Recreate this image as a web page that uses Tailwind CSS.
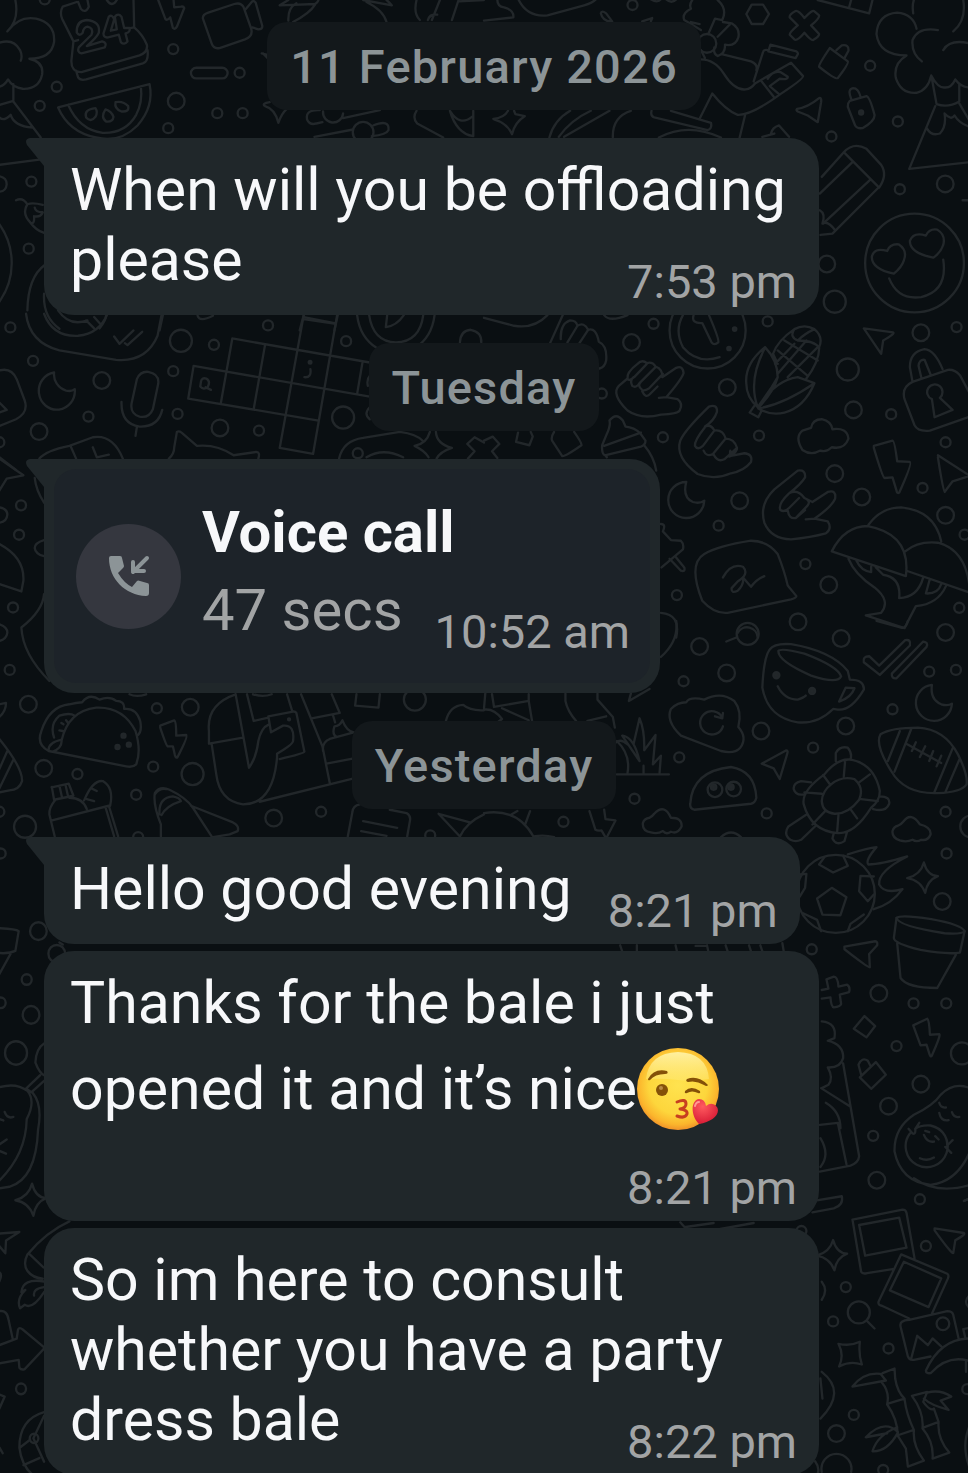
<!DOCTYPE html>
<html lang="en">
<head>
    <meta charset="UTF-8">
    <meta name="viewport" content="width=device-width, initial-scale=1.0">
    <title>Chat</title>
    <script src="https://cdn.jsdelivr.net/npm/@tailwindcss/browser@4"></script>
</head>
<body class="bg-[#0a0f12] font-['Roboto',sans-serif]">
    <main class="relative min-h-screen overflow-hidden pt-[22px] pl-11 pr-11">

        <!-- Wallpaper doodles -->
        <svg class="absolute inset-0 w-full h-full" viewBox="0 0 968 1473" preserveAspectRatio="xMidYMin slice" fill="none" stroke="#22272a" stroke-width="7" stroke-linecap="round" stroke-linejoin="round" aria-hidden="true">
            <defs>
                <circle id="s" r="15"/>
                <circle id="m" r="25"/>
                <circle id="l" r="33"/>
                <path id="star" d="M4-45Q14-6 46-4Q14 8 8 46Q-6 8-46 2Q-6-8 4-45Z"/>
            </defs>

            <!-- top left -->
            <g transform="scale(.3333)">
                <path d="M48 0Q60 60 24 94Q60 46 110 56Q168 70 164 126Q156 176 90 176Q134 186 128 224Q118 268 70 266Q40 262 26 238Q14 260-10 262M-10 132Q40 110 62 150Q70 168 64 182M42 252L42 302L-6 316M42 304L124 412M-6 344Q8 370 34 344Q44 378 100 382M0 494L120 478"/>
                <path d="M190 20Q180 36 188 56L222 124L216 180Q214 216 246 216L420 166Q446 156 442 134Q430 104 404 82L402 0M190 20L232 6M236 6L244 26Q258 42 268 20L264 0M322 0Q338 24 352 0M222 124L236 120M392 84L404 82M230 212L236 232Q242 242 260 238L430 190Q448 184 444 150"/>
                <path d="M232 98Q230 62 262 60Q304 64 298 98Q292 112 262 138L308 124Q324 128 316 142L246 160Q232 156 238 142L276 104Q284 84 264 80Q252 82 250 98Q240 110 232 98ZM328 50L312 100Q312 114 326 112L358 104L364 126Q374 136 384 124L378 100Q394 96 390 84L374 84L366 50Q356 38 346 50L352 88L334 92L344 58Q338 42 328 50Z"/>
                <path d="M176 322L450 252Q464 320 414 376Q360 430 290 412Q208 396 176 322ZM206 314Q240 390 310 398Q378 400 410 344Q430 306 424 260M288 324Q252 328 260 352Q274 368 288 350Q296 336 288 324ZM318 328Q302 352 320 364Q340 366 342 350Q336 334 318 328ZM348 306Q344 326 366 334Q390 336 386 318Q372 302 348 306Z"/>
                <path d="M476 0L498 58Q504 62 512 52L520 84Q526 90 532 80L554 24Q552 18 544 20L524 22L522 0"/>
                <path d="M610 56L636 130Q642 148 660 144L736 118Q762 108 754 84L732 22Q724 6 704 12L626 38Q608 44 610 56ZM738 28L758 4Q764 2 768 8L788 78Q788 88 776 88L758 82"/>
                <rect x="574" y="203" width="110" height="32" rx="16"/>
                <path d="M840 16L866 0M840 16L946 12Q960 2 954 -4M946 14Q930 40 880 66M866 62Q864 24 890 10M1090 0L1176 16Q1170 8 1160 0M1100 6Q1150 30 1160 66M1250 0Q1240 40 1260 60M1320 0L1296 60M1376 0L1356 60M1378 4L1452 0M1284 60Q1290 40 1312 44"/>
                <path d="M786 160L810 166M810 306Q784 310 796 318Q826 326 836 368Q846 340 860 328M810 180L790 160M960 330Q916 328 922 358Q930 376 950 370L968 366M1030 354L1140 330M970 334A30 30 0 0 0 1030 340M944 410L1060 388M1120 376Q1170 356 1166 390Q1160 404 1116 408M1250 332Q1236 352 1252 370L1330 412M1350 332Q1370 400 1420 408L1420 332M1350 332Q1380 380 1416 350"/>
                <circle cx="1090" cy="396" r="31"/>
                <path d="M50 600Q70 590 84 612Q100 606 130 614M84 612Q66 640 94 668Q106 672 104 648Q124 652 130 636Q108 636 106 622M94 668Q110 690 134 698M0 672A200 200 0 0 1 0 904M136 794Q86 830 84 930M134 880Q130 950 180 985M0 528Q22 532 22 552Q20 574 0 574M176 930Q210 980 264 960M260 960L284 984M284 950L302 970M300 984Q320 960 320 944"/>
                <path d="M490 944L480 990M594 946Q600 966 640 946M912 944L900 990M1014 944L1004 990M912 956L1008 970"/>
                <use href="#s" x="136" y="-2"/><use href="#s" x="521" y="147"/><use href="#s" x="720" y="218"/><use href="#s" x="172" y="260"/><use href="#s" x="121" y="317"/><use href="#m" x="530" y="303"/><use href="#s" x="653" y="339"/><use href="#s" x="729" y="339"/><use href="#s" x="506" y="384"/><use href="#s" x="96" y="544"/><use href="#s" x="88" y="745"/>
            </g>

            <!-- top right -->
            <g transform="translate(484 0) scale(.3333)">
                <path d="M40 0Q40 20 60 22Q90 30 88 52L0 62M104 0Q130 52 190 46L300 16Q330 8 340 -8M350 40Q352 30 366 40L384 64Q356 66 350 40ZM474 64L504 54L500 64M500 -2Q520 10 530 -2M546 -2Q562 12 576 -2"/>
                <path d="M624 0Q614 14 620 26Q592 40 600 60L650 90M620 66L646 72M700 0Q730 26 714 60L692 56L672 102M716 66L742 70Q768 86 762 112Q754 140 722 134Q724 160 700 168Q686 160 690 142M736 74L700 110M650 150L662 174M646 178Q690 176 718 220Q750 272 784 268Q800 266 812 250L920 188L956 228Q958 236 888 282Q800 346 760 344Q724 330 684 280L646 356M712 162L800 184Q822 194 816 210M808 244L836 156Q838 148 850 150M858 134L936 154Q944 160 938 166L934 174L852 154ZM832 244L868 290M850 236Q866 210 888 216L910 230Q912 240 886 236L856 258L884 282"/>
                <circle cx="668" cy="130" r="28"/>
                <path d="M802 14L836 14L854 42L836 72L802 72L786 42ZM932 34Q940 28 960 54Q984 28 990 34L1004 46Q1006 54 980 76L1004 102Q1004 110 986 120Q980 122 960 98Q938 124 930 118L916 104Q916 96 940 76L916 52Q914 44 932 34Z"/>
                <path d="M1036 144L1090 184Q1094 190 1060 234Q1054 240 1004 200Q1002 194 1036 144ZM1056 150L1072 136Q1094 132 1092 152L1080 174M1096 302L1146 288Q1156 290 1170 344Q1172 362 1134 384Q1118 386 1112 376L1090 320Q1090 308 1096 302ZM1100 296Q1088 266 1106 264Q1122 264 1128 290M938 326Q970 322 1004 294Q1012 292 1010 306L1000 366L970 346L940 334Q934 330 938 326ZM1000 0L1154 40L1164 0M1094 22L1100 0"/>
                <circle cx="1130" cy="337" r="6" fill="#22272a"/>
                <path d="M1296 86Q1286 42 1238 38Q1180 42 1176 102Q1184 166 1266 166Q1226 190 1234 234Q1250 282 1296 278Q1330 270 1340 226Q1360 264 1380 262Q1400 264 1412 238Q1430 262 1456 262M1286 40Q1280 0 1300 -20M1436 0Q1446 60 1406 94M1312 184Q1280 160 1284 120Q1300 80 1360 90M1376 150Q1396 116 1456 130M1342 236L1356 312Q1390 324 1424 304L1424 250M1352 318L1274 506L1456 486M1328 386Q1340 408 1366 400Q1386 380 1380 340Q1400 362 1410 346Q1424 370 1456 380M1424 310L1456 364"/>
                <path d="M28 356Q60 354 72 332M30 358Q70 370 84 402Q92 366 122 348M122 348L94 342L90 332M196 412Q210 360 258 332M224 410Q260 360 320 332M240 410L376 332M386 412Q384 350 440 332M502 332Q498 348 510 352L670 390Q684 386 680 368L560 332M524 412Q610 366 710 412M782 346L766 412M860 400Q864 382 884 376L914 410M834 410L870 400"/>
                <path d="M1078 456L1012 530M1104 486L1006 580M1156 540L1016 670M1180 564L1044 700L1008 704M1078 456L1184 562M1078 456Q1108 424 1146 446L1190 494Q1210 524 1184 562M1006 630Q1024 640 1014 670Q1030 660 1052 690"/>
                <circle cx="1290" cy="788" r="148"/>
                <path d="M1228 820Q1162 806 1162 770Q1168 740 1208 752Q1216 730 1242 732Q1270 750 1258 780Q1252 800 1228 820ZM1346 772Q1276 758 1276 722Q1286 694 1324 706Q1334 684 1358 688Q1384 704 1376 734Q1368 758 1346 772ZM1214 834Q1240 900 1310 890Q1390 872 1376 778M1434 600L1452 600"/>
                <use href="#s" x="445" y="15"/><use href="#s" x="1157" y="197"/><use href="#s" x="1240" y="364"/><use href="#s" x="1041" y="409"/><use href="#s" x="1246" y="567"/><use href="#m" x="1382" y="551"/><use href="#m" x="1027" y="791"/><use href="#l" x="1051" y="904"/>
            </g>

            <!-- crossword, microphone -->
            <g transform="translate(0 310) scale(.3333)">
                <path d="M80 10Q90 96 180 120L350 148Q440 156 474 76L486 14M134 10Q160 80 236 76Q300 70 324 10M344 78L360 100L402 60M376 98L384 104L428 64"/>
                <path d="M164 186A54 56 0 1 0 226 236Q216 244 200 240A50 50 0 0 1 164 186ZM412 206Q422 182 446 184Q480 190 476 220L460 296Q448 324 420 318Q392 310 396 280ZM366 274Q364 340 420 348Q476 350 488 298M412 350L408 376M0 180Q36 170 52 206L76 270Q88 306 50 326L0 346M0 276L22 298L0 306M0 440L50 478M120 444Q140 420 210 406L280 380Q340 370 370 444M214 408L230 444M280 410L292 440L328 432M508 444Q524 430 524 410L532 364Q538 360 546 366L592 406Q650 400 702 434L770 424Q782 424 776 444"/>
                <path d="M698 84L1110 156M582 166L1110 258M566 264L956 330M840 412L940 430M698 84L664 276M582 166L566 264M796 104L762 296M912 14L840 412M1012 14L940 430M1088 156L1072 250M912 20L1004 38M604 214Q606 200 620 204Q634 212 624 230Q612 240 602 228ZM618 230L634 238M932 176Q936 202 914 200M1110 196Q1100 206 1104 226"/>
                <circle cx="931" cy="155" r="4" fill="#22272a"/>
                <path d="M1072 14Q1080 80 1130 112M1304 14Q1296 80 1246 112M1108 14Q1120 94 1188 96Q1260 94 1270 14M1162 14L1158 50Q1190 46 1212 14M1380 96Q1382 60 1412 58Q1446 64 1444 96M1110 290Q1090 310 1110 326M1018 444Q1030 390 1090 382L1200 364Q1250 370 1270 392M1100 440Q1150 410 1210 440M1308 364Q1310 400 1356 412Q1320 424 1310 444M1290 364Q1280 400 1244 406Q1274 420 1286 440M1452 396L1424 380L1402 400L1424 422L1404 444"/>
                <use href="#s" x="33" y="51"/><use href="#l" x="544" y="91"/><use href="#s" x="643" y="103"/><use href="#s" x="805" y="45"/><use href="#s" x="1039" y="92"/><use href="#s" x="101" y="151"/><use href="#m" x="307" y="210"/><use href="#s" x="521" y="182"/><use href="#s" x="267" y="318"/><use href="#s" x="534" y="310"/><use href="#m" x="119" y="363"/><use href="#m" x="661" y="352"/><use href="#s" x="778" y="360"/><use href="#l" x="1030" y="321"/><use href="#s" x="1074" y="428"/><use href="#s" x="0" y="395"/>
            </g>

            <!-- hands, corn, mushrooms -->
            <g transform="translate(484 310) scale(.3333)">
                <path d="M0 22L90 46Q150 56 190 14M198 98L236 14M230 86Q228 40 258 30Q276 30 280 46Q300 34 312 58Q336 50 344 94Q370 106 366 150Q362 170 346 174M280 46L250 96M312 58L286 98M360 14Q376 36 430 14"/>
                <circle cx="670" cy="60" r="114"/>
                <path d="M596 14Q570 60 596 110Q640 162 706 140M628 14Q620 40 654 38L682 96Q690 106 702 96Q706 88 674 14"/>
                <path d="M430 204Q426 186 460 160Q474 146 488 158Q504 152 514 168Q536 176 534 200L576 172Q596 164 598 188Q590 210 546 260L580 266Q598 280 586 300Q580 310 530 312Q470 328 430 300Q380 250 404 226ZM488 160L450 200Q432 214 430 204M514 170L466 218Q456 234 444 226Q436 210 448 200M536 190L494 234Q480 242 474 238Q458 226 470 214M520 228L496 252Q484 264 474 242M524 262L546 260"/>
                <path d="M786 220Q780 160 842 110Q880 150 880 200L862 230L820 290Q786 260 786 220ZM842 112Q790 210 820 290M880 200Q870 240 822 292Q870 210 940 200L990 218Q960 290 900 306Q860 316 822 294Q900 280 990 218M810 286L796 306L822 320L832 300M866 130Q880 90 930 56Q960 40 990 56Q1018 80 1004 110Q1006 150 966 204M866 130L880 160M930 56Q914 80 940 90Q960 70 990 56M940 90Q990 90 1004 112M900 90L1000 150M880 120L970 196M880 190L966 90M910 200L1000 110M872 160L930 100"/>
                <path d="M1138 54L1226 66Q1232 70 1196 90L1190 130ZM1284 214L1276 170Q1276 124 1320 116Q1350 118 1374 176M1310 200L1302 166Q1304 146 1320 148L1338 192M1284 214L1390 178Q1410 176 1426 194L1456 250M1284 214Q1250 230 1260 266L1290 344Q1300 364 1336 360L1456 318M1342 266A23 23 0 1 1 1366 262L1404 298L1350 320Z"/>
                <path d="M674 288Q700 280 698 304Q690 330 662 348Q680 340 690 360Q716 356 724 384Q750 384 758 412Q760 420 740 436L780 428Q806 430 800 454Q780 480 740 488Q690 510 640 490Q572 440 588 390Q600 360 674 288ZM690 360L656 406Q640 420 632 406Q630 390 662 350M724 384L686 430Q666 440 658 420M758 412L720 446Q700 456 688 432M738 420L736 438"/>
                <path d="M940 480Q964 476 962 500Q950 520 914 548Q940 534 960 562L984 574L1030 544Q1056 536 1052 564Q1040 590 990 624L1030 632Q1044 654 1024 668Q980 680 920 686Q860 684 840 636Q824 580 870 536ZM914 548Q880 580 888 598Q900 606 914 592L944 562M960 562Q980 570 970 584L934 622Q914 626 910 600M962 598L934 622M964 626L990 624"/>
                <path d="M980 352Q984 326 1012 326Q1040 332 1044 356Q1088 350 1092 384Q1080 418 1042 410Q1026 426 1008 420Q980 436 954 418Q930 380 954 360ZM1168 406L1224 390Q1230 390 1238 452L1276 454Q1284 458 1244 546Q1238 550 1236 540L1224 500L1200 502Q1194 500 1168 412ZM1360 434L1456 496L1404 512L1380 544Q1376 544 1360 440M354 404L368 370Q380 344 376 330Q396 304 416 330L424 348Q450 350 468 368L484 390Q484 404 470 408L362 434Q352 430 354 404ZM360 406L470 366M368 440L364 434M480 404Q510 440 516 480"/>
                <path d="M606 514A54 54 0 1 0 660 570Q646 580 626 574Q594 560 606 514ZM530 640Q546 640 536 662L560 688L590 690Q600 700 596 716L532 770M556 744L590 780Q604 784 600 770L572 736"/>
                <path d="M660 730Q700 706 800 690Q850 690 880 730Q900 780 910 824L936 856Q936 862 920 866L730 906Q690 910 654 870Q610 760 660 730ZM716 800Q740 756 776 768Q796 790 760 812L742 832Q740 850 760 840Q780 820 776 800L800 828Q816 806 840 796"/>
                <path d="M1042 722Q1080 646 1150 646Q1280 670 1264 796ZM1152 642Q1190 590 1250 590Q1350 600 1370 692M1262 722Q1300 690 1360 696Q1450 720 1456 846L1266 780M1092 744Q1110 790 1170 830Q1220 870 1190 906L1144 914L1260 952Q1276 920 1294 886Q1360 880 1384 826M1174 770L1196 792Q1250 800 1244 862Q1300 860 1316 800M1116 750Q1130 780 1160 784V768M1336 804L1324 848Q1360 850 1370 820"/>
                <path d="M102 366L96 394L136 404L146 378L140 364M204 390L234 436Q240 440 292 404Q294 398 270 364M204 390Q200 380 210 364M0 390L26 378L46 400L24 422L40 442M530 906Q590 910 576 980M760 966A32 32 0 0 1 820 980"/>
                <use href="#s" x="508" y="40"/><use href="#m" x="442" y="96"/><use href="#s" x="850" y="33"/><use href="#m" x="1309" y="67"/><use href="#s" x="1416" y="50"/><use href="#l" x="1090" y="177"/><use href="#m" x="729" y="231"/><use href="#s" x="353" y="249"/><use href="#m" x="1107" y="298"/><use href="#s" x="1220" y="311"/><use href="#s" x="536" y="380"/><use href="#s" x="824" y="375"/><use href="#s" x="1383" y="395"/><use href="#m" x="1051" y="489"/><use href="#m" x="766" y="570"/><use href="#m" x="1132" y="559"/><use href="#s" x="1314" y="532"/><use href="#m" x="1383" y="614"/><use href="#s" x="703" y="645"/><use href="#s" x="1440" y="672"/><use href="#s" x="963" y="760"/><use href="#m" x="1033" y="822"/><use href="#s" x="578" y="853"/><use href="#s" x="1424" y="891"/>
                <circle cx="751" cy="56" r="5" fill="#22272a"/><circle cx="734" cy="114" r="5" fill="#22272a"/>
            </g>

            <!-- left edge by the call -->
            <g transform="translate(0 440) scale(.3333)">
                <path d="M0 54L72 104L22 114L0 150M106 112Q110 150 134 186M0 200Q24 204 24 222Q22 244 0 246M134 298Q106 306 106 322Q108 340 134 346M0 310Q76 350 72 420L66 452L0 430M134 460Q130 510 66 560Q70 640 150 720M0 550Q24 558 24 575Q22 594 0 600"/>
                <use href="#s" x="65" y="194"/><use href="#s" x="59" y="282"/><use href="#s" x="41" y="500"/><use href="#s" x="31" y="687"/>
            </g>

            <!-- taco, bottle, hands -->
            <g transform="translate(0 680) scale(.3333)">
                <path d="M0 70L20 66Q20 90 0 108M0 174Q70 260 68 300Q60 326 30 328L0 334M24 210L0 264M42 236L0 322"/>
                <path d="M186 180Q206 90 290 80Q370 76 408 150Q426 210 410 250Q400 260 380 256L148 210Q110 190 126 150Q150 76 210 70Q230 66 248 64Q270 36 300 56Q330 44 350 60Q376 60 374 84Q410 80 422 120Q428 150 416 162M148 210Q144 186 186 176Q190 200 160 212M164 170Q150 130 180 104Q210 94 226 104M186 126L192 130M180 148L190 150M200 118L206 126"/>
                <path d="M158 322Q154 316 160 318L208 308L222 344L164 356ZM180 314L188 350M198 310L206 346M168 356Q148 380 150 400L166 466M210 350Q250 350 262 384M158 418L328 374L356 466M318 378L344 466M254 358Q280 296 310 300Q344 320 332 374M276 322L292 330M262 354L284 360"/>
                <path d="M482 134L524 118Q530 120 530 164L560 162Q566 166 534 228Q530 234 526 222L520 196L504 196Q500 194 482 140ZM484 466V430Q460 370 466 336Q480 314 510 326Q560 350 580 380L636 466M480 400Q476 350 520 346Q540 350 544 360Q500 374 486 402M466 340Q480 320 500 324M574 374L700 424Q720 434 714 450L690 460L640 468"/>
                <path d="M708 40Q620 70 628 150V188L730 170M708 40L748 260Q770 230 776 180Q784 140 808 130M742 40L762 120L806 110M862 40L878 92Q886 90 890 96L914 212Q912 218 840 234M636 188L650 280Q660 360 730 370Q820 370 832 230V218Q880 190 880 180Q886 130 850 134L814 154L806 106L880 92M780 362L1062 292M904 40L968 196L990 306M936 112L1020 96L996 40M1000 104L1006 124M1062 154Q1040 150 1028 118Q1020 136 1004 136Q996 160 1010 168M1062 154L990 174Q966 184 970 210M980 248L1062 232M760 40Q790 50 816 40"/>
                <path d="M1070 40L1066 74L1136 80L1140 40M1338 120Q1350 74 1390 72Q1410 90 1452 88M1044 466L1058 392Q1060 374 1080 370M1170 386L1220 396Q1234 404 1230 420L1222 466M1090 420L1192 440M1084 450L1160 464M1410 424L1316 398L1380 466Q1400 424 1452 400M390 40Q410 50 440 40"/>
                <circle cx="868" cy="115" r="3"/>
                <g fill="#22272a"><circle cx="372" cy="164" r="6"/><circle cx="388" cy="191" r="6"/><circle cx="354" cy="198" r="6"/></g>
                <use href="#m" x="87" y="70"/><use href="#s" x="472" y="82"/><use href="#m" x="572" y="79"/><use href="#l" x="1245" y="56"/><use href="#m" x="133" y="262"/><use href="#s" x="234" y="279"/><use href="#s" x="461" y="257"/><use href="#l" x="579" y="279"/><use href="#s" x="410" y="341"/><use href="#m" x="822" y="411"/><use href="#s" x="964" y="392"/><use href="#l" x="77" y="437"/><use href="#s" x="416" y="468"/><use href="#s" x="1291" y="463"/><use href="#s" x="0" y="392"/><use href="#s" x="4" y="517"/>
            </g>

            <!-- cup, turtle, football -->
            <g transform="translate(484 620) scale(.3333)">
                <path d="M576 0Q584 60 530 108M726 62L756 50M1176 0L1250 20Q1264 24 1270 0M0 266Q30 262 54 294L30 312M4 216L0 262M24 220L30 258L134 240V220M54 262L134 298M134 240L144 300M244 218V240Q250 270 276 300M340 218V236L386 288L392 320M310 300L366 286M434 240L440 218M434 240L496 204M396 364Q410 352 430 370"/>
                <path d="M856 86Q870 66 920 70Q1040 90 1090 150L1096 176Q1140 176 1138 206Q1100 270 1060 266L1046 264Q1000 310 940 304Q850 290 834 200Q838 110 856 86ZM882 90Q890 80 960 98Q1060 136 1070 166Q1060 190 980 164Q880 120 882 90ZM1084 200L1110 202Q1100 230 1064 242ZM880 196Q900 236 940 236Q958 230 964 224"/>
                <g fill="#22272a"><circle cx="876" cy="163" r="9"/><circle cx="983" cy="210" r="9"/><circle cx="688" cy="498" r="8"/><circle cx="740" cy="498" r="8"/></g>
                <path d="M1138 124Q1134 106 1154 106L1184 134L1262 58Q1280 54 1276 74L1186 162ZM1222 158L1316 62Q1332 64 1326 78L1236 172Q1220 174 1222 158ZM1342 192A54 54 0 1 0 1402 248Q1390 256 1370 250Q1336 236 1342 192Z"/>
                <path d="M606 244Q616 226 660 236Q710 210 750 240Q774 270 762 318Q790 350 768 380Q750 400 710 390L590 344Q544 300 560 264Q580 244 606 244ZM714 290A35 35 0 1 0 716 316M692 286L714 292L716 276"/>
                <path d="M398 460H554M430 456Q440 400 398 360M414 344L466 420M416 344Q450 350 466 420M448 370L466 292Q482 330 480 388L514 342L506 430L530 404L526 456M478 434V456"/>
                <path d="M832 428L906 388Q912 388 908 400L886 474L868 442ZM618 548Q624 450 740 438Q812 450 816 530Q812 546 800 548L630 566Q616 562 618 548Z"/>
                <circle cx="692" cy="506" r="22"/><circle cx="748" cy="504" r="22"/>
                <path d="M496 590Q506 584 510 578Q540 546 560 590Q594 590 592 616Q580 640 560 632Q546 642 536 630Q520 640 500 634Q474 630 476 606Q480 592 496 590ZM1240 614Q1250 610 1256 602Q1280 570 1306 610Q1340 618 1338 640Q1330 660 1310 656Q1296 664 1284 656Q1266 664 1246 658Q1222 650 1224 630Q1228 616 1240 614Z"/>
                <path d="M1020 460Q1060 410 1100 416Q1170 430 1186 510Q1186 540 1160 560Q1110 640 1060 636Q980 630 958 550Q950 510 1020 460ZM1040 490Q1070 464 1110 474Q1140 500 1124 536Q1090 580 1050 578Q1014 574 1012 540Q1014 510 1040 490ZM1016 462L1038 492M1082 420L1078 466M1156 460L1124 484M1130 534L1180 540M1098 564L1118 592M1062 582L1058 634M1022 570L984 610M960 514L1012 518M1054 420V396Q1066 374 1090 380Q1104 396 1098 416M980 484L950 480Q926 486 928 504Q934 524 958 520M1186 526Q1218 526 1214 548Q1204 574 1166 564M1048 636L1044 652Q1056 676 1080 660L1088 632M964 582L912 616Q896 640 918 656Q934 664 950 656L994 614"/>
                <path d="M1188 340Q1220 320 1300 320Q1380 324 1420 400Q1450 460 1446 490Q1430 514 1360 516Q1260 520 1220 450Q1170 370 1188 340ZM1246 330L1210 420M1280 324L1230 452M1404 382L1350 512M1424 416L1382 514M1268 370L1370 426M1294 364L1282 390M1322 376L1306 408M1346 390L1334 420M1370 404L1356 436"/>
                <circle cx="1054" cy="818" r="117"/>
                <path d="M1042 800L1086 828L1068 882L1014 880L998 832ZM1020 708L1004 730L1046 754L1090 734L1076 704M946 760L966 758L962 800L946 826M1168 766L1128 764L1124 810L1150 840L1168 820M956 876L998 896L1010 930M1090 930L1098 908L1138 880M1090 700Q1150 680 1176 678Q1140 720 1152 730Q1190 730 1268 706Q1180 750 1184 790Q1200 820 1254 804Q1220 850 1168 864"/>
                <use href="#star" x="1314" y="769"/>
                <path d="M1236 890Q1250 880 1340 894Q1430 910 1440 930Q1430 940 1380 936Q1240 914 1236 890Z"/>
                <path d="M0 576Q100 560 148 646Q180 640 210 648M82 580L100 570M124 608L138 570M316 570L334 626Q340 630 352 628L366 652L394 598L364 594L360 566M710 648Q740 620 770 648"/>
                <use href="#m" x="646" y="77"/><use href="#l" x="790" y="39"/><use href="#m" x="941" y="3"/><use href="#m" x="1070" y="53"/><use href="#m" x="1383" y="35"/><use href="#m" x="727" y="156"/><use href="#s" x="598" y="181"/><use href="#s" x="1334" y="152"/><use href="#s" x="1414" y="147"/><use href="#s" x="1224" y="265"/><use href="#m" x="1084" y="315"/><use href="#m" x="830" y="330"/><use href="#s" x="986" y="380"/><use href="#s" x="585" y="409"/><use href="#s" x="451" y="533"/><use href="#s" x="847" y="577"/><use href="#s" x="238" y="602"/><use href="#s" x="1383" y="572"/><use href="#l" x="1460" y="616"/><use href="#s" x="1386" y="697"/><use href="#m" x="1373" y="841"/>
            </g>

            <!-- flower pot, popcorn, peanut -->
            <g transform="translate(620 920) scale(.3333)">
                <path d="M1032 30L1018 94Q980 100 900 86Q820 66 820 50L828 -10M830 66L840 170Q860 200 950 200L1006 100M672 76L764 60Q772 60 770 72L746 98L748 138Q744 140 672 84ZM618 174L640 166Q652 166 654 196L680 190Q690 196 686 212L658 220L662 248Q660 256 640 258Q632 256 630 228L604 232M604 206L624 202L618 174M732 284L764 314L738 348L700 322Z"/>
                <path d="M878 312L920 292Q926 296 928 340L956 338Q962 340 934 402Q930 410 926 396L918 370L900 372ZM766 422L796 460L752 502L718 468ZM722 460L714 430Q724 406 742 418L750 434M604 300Q650 304 642 350L622 358Q670 370 668 410Q660 440 622 438Q640 470 624 490L604 500M668 426L716 704Q714 724 690 732L598 750M602 500L688 554M616 544Q660 570 660 620M598 610L652 604L678 728M600 650Q630 700 600 736M566 840L664 824Q670 850 640 860L576 872"/>
                <path d="M1048 500Q1000 480 960 520Q940 550 880 580Q820 620 822 690Q840 780 930 790Q1010 780 1048 690M880 770Q950 820 1048 790M868 636A63 63 0 1 0 930 612M864 622L876 636Q886 640 884 622L896 604M884 622Q900 610 930 612Q980 626 980 672L996 656M974 676L992 694M898 710Q920 720 940 708M910 640Q920 664 940 660M914 628L926 632M944 644L954 654M956 544Q960 560 976 558M956 574Q960 600 984 596M994 572Q1000 590 1016 586M0 72L6 90M50 72V90M166 72L170 90M226 74L260 74M260 72L264 90M316 72L322 90M386 72L392 90M420 72L426 90M486 66L490 90M1048 830L1030 838"/>
                <use href="#s" x="574" y="84"/><use href="#m" x="775" y="216"/><use href="#s" x="879" y="246"/><use href="#s" x="977" y="246"/><use href="#s" x="828" y="374"/><use href="#l" x="1024" y="396"/><use href="#m" x="901" y="488"/><use href="#m" x="804" y="554"/><use href="#s" x="758" y="643"/><use href="#m" x="769" y="776"/><use href="#s" x="898" y="833"/>
            </g>

            <!-- photos, bamboo -->
            <g transform="translate(620 1190) scale(.3333)">
                <path d="M696 84L846 54Q856 54 858 64L882 200M696 84L722 240Q726 248 740 244L816 232M716 100L836 78L858 168L734 192ZM842 188L980 246Q986 250 982 260L934 366M842 188L774 330Q772 340 784 342L866 380M850 210L962 260L924 346L808 296ZM866 384L980 358Q996 358 998 370L1014 440M866 384Q836 386 840 404L862 494Q866 506 880 504L930 494M872 500L890 432L922 460L936 440L962 464M1048 440Q960 440 916 536Q916 546 930 544Q980 490 1040 506M1034 438L1028 412L1048 408M1036 506V540"/>
                <circle cx="715" cy="362" r="33"/><circle cx="967" cy="396" r="19"/>
                <path d="M740 388L762 410M654 456Q690 464 718 450Q714 490 724 518Q690 506 656 524Q672 490 654 456ZM942 110L1030 124Q1036 128 1004 146L998 184Q994 188 942 116ZM1048 20L1030 28M180 92L196 110M196 106L280 94M300 112L400 94M604 270Q624 296 604 324M604 540Q680 600 600 680M600 560L606 620"/>
                <path d="M786 544L822 530L824 560Q830 600 852 620L800 636Q808 600 784 572M696 584Q730 540 780 546L796 566ZM800 638Q830 680 832 730L880 714Q858 670 852 622M832 732L856 770L862 824L910 806Q876 760 880 716M832 720Q790 680 736 736L800 724M832 722Q800 780 756 778Q770 730 830 706M874 612L920 600L908 630Q930 660 940 650L954 690L906 708Q910 660 874 612ZM906 710Q940 750 936 800L986 782Q950 740 954 692M920 602Q960 592 992 614L960 626L984 654Q930 640 910 620M604 840A45 45 0 1 1 692 840M584 808Q600 830 590 849M1048 700Q1020 760 1048 830M1048 310Q1024 330 1048 350"/>
                <use href="#star" x="634" y="190"/>
                <use href="#s" x="916" y="163"/><use href="#s" x="676" y="286"/><use href="#s" x="638" y="389"/><use href="#s" x="804" y="470"/><use href="#s" x="1040" y="592"/><use href="#s" x="700" y="669"/><use href="#m" x="648" y="725"/><use href="#s" x="788" y="834"/><use href="#s" x="543" y="118"/>
            </g>

            <!-- left edge, lower part -->
            <g transform="translate(0 920) scale(.3333 .3527)">
                <path d="M0 20Q50 22 58 28L48 84Q30 92 0 90M34 92L0 150M180 60L190 66M134 346Q110 360 108 400Q120 430 134 436M80 474L96 484L134 452M80 474L122 436M0 470Q50 456 84 480Q110 510 82 560Q80 660 0 734M100 486Q130 520 116 590Q110 730 30 752L0 756M0 560L12 564M16 540Q24 560 42 554M0 632L22 618M0 650L20 658M0 884L60 880L20 904L18 940L0 920M0 994Q10 1000 0 1020"/>
                <path d="M210 850Q140 880 84 944Q70 970 84 990Q100 1010 130 1012M92 944L132 980M134 1020Q70 1010 66 1050L78 1044Q50 1070 62 1096L76 1086Q100 1100 134 1050M134 1036Q100 1040 104 1060M0 1104Q24 1100 28 1130L40 1182M0 1200L52 1182L56 1156Q60 1148 70 1156L136 1208L76 1268Q66 1272 60 1264L58 1242L0 1252M0 1340L16 1346L0 1380M0 1490L10 1506M134 1390Q60 1410 60 1490Q66 1540 100 1568M134 1400L102 1464L134 1530M62 1490L92 1468M72 1540L120 1520"/>
                <use href="#m" x="117" y="28"/><use href="#m" x="172" y="92"/><use href="#s" x="82" y="165"/><use href="#m" x="95" y="265"/><use href="#l" x="50" y="373"/><use href="#s" x="4" y="231"/><use href="#star" x="94" y="788"/><use href="#s" x="65" y="1324"/><circle cx="104" cy="1464" r="13"/>
            </g>
        </svg>

        <section class="relative flex flex-col items-start gap-7">
            <h2 class="self-center rounded-[20px] bg-[#13181b] px-[23px] pt-[18px] pb-4 text-[47px] leading-[54px] font-medium tracking-wide text-[#8c9497]">11 February 2026</h2>

            <article class="relative flow-root w-[775px] max-w-full rounded-[30px] rounded-tl-none bg-[#20272a] pt-[17px] pr-[22px] pb-[6px] pl-[26px]">
                <svg class="absolute top-0 -left-[18px] w-[19px] h-7" viewBox="0 0 19 28" fill="#20272a" aria-hidden="true"><path d="M19 0H4Q-2 1 1 7L18 28H19Z"/></svg>
                <p class="text-[59px] leading-[70px] text-[#f7f8fa]">When will you be offloading please<time class="float-right mt-[30px] text-[47px] leading-[54px] text-[#a2a4a5]">7:53 pm</time></p>
            </article>

            <h2 class="self-center rounded-[20px] bg-[#13181b] px-[23px] pt-[18px] pb-4 text-[47px] leading-[54px] font-medium tracking-wide text-[#8c9497]">Tuesday</h2>

            <article class="relative max-w-full rounded-[30px] rounded-tl-none bg-[#20272a] p-[10px]">
                <svg class="absolute top-0 -left-[18px] w-[19px] h-7" viewBox="0 0 19 28" fill="#20272a" aria-hidden="true"><path d="M19 0H4Q-2 1 1 7L18 28H19Z"/></svg>
                <button type="button" class="flex items-center gap-[21px] rounded-[22px] bg-[#1d2329] pl-[22px] pr-5 text-left">
                    <span class="flex size-[105px] shrink-0 items-center justify-center rounded-full bg-[#35373f]">
                        <svg class="size-[42px]" viewBox="0 0 42 42" fill="#8c9497" aria-hidden="true">
                            <path d="M3 1H12Q14 1 14 3L16 11Q16 12 15 13L10 18Q16 28 24 32L29 26Q30 25 32 26L39 28Q41 28 41 30V38Q41 41 38 41C17 40 1 24 1 3Q1 1 3 1Z"/>
                            <path d="M39 3L25 17M25 7V16H36" fill="none" stroke="#8c9497" stroke-width="4" stroke-linecap="round" stroke-linejoin="round"/>
                        </svg>
                    </span>
                    <span class="block pt-[29px] pb-6">
                        <span class="block text-[58px] leading-[68px] font-bold text-[#f7f8fa]">Voice call</span>
                        <span class="mt-[10px] flex items-start gap-8">
                            <span class="text-[58px] leading-[68px] text-[#a2a4a5]">47 secs</span>
                            <time class="mt-[29px] text-[47px] leading-[54px] text-[#a2a4a5]">10:52 am</time>
                        </span>
                    </span>
                </button>
            </article>

            <h2 class="self-center rounded-[20px] bg-[#13181b] px-[23px] pt-[18px] pb-4 text-[47px] leading-[54px] font-medium tracking-wide text-[#8c9497]">Yesterday</h2>

            <div class="flex w-[775px] max-w-full flex-col items-start gap-[7px]">
                <article class="relative flow-root max-w-full rounded-[30px] rounded-tl-none bg-[#20272a] pt-[17px] pr-[22px] pb-[6px] pl-[26px]">
                    <svg class="absolute top-0 -left-[18px] w-[19px] h-7" viewBox="0 0 19 28" fill="#20272a" aria-hidden="true"><path d="M19 0H4Q-2 1 1 7L18 28H19Z"/></svg>
                    <p class="text-[59px] leading-[70px] text-[#f7f8fa]">Hello good evening<time class="float-right mt-[30px] ml-9 text-[47px] leading-[54px] text-[#a2a4a5]">8:21 pm</time></p>
                </article>

                <article class="flow-root w-full rounded-[30px] bg-[#20272a] pt-[17px] pr-[22px] pb-[6px] pl-[26px]">
                    <p class="text-[59px] leading-[70px] text-[#f7f8fa]">Thanks for the bale i just opened it and it’s nice<svg class="mt-[10px] mb-px inline-block size-[82px] align-[-22px]" viewBox="0 0 82 82" role="img" aria-label="Face blowing a kiss">
                        <defs>
                            <radialGradient id="face" cx=".5" cy=".45" r=".55">
                                <stop offset="0" stop-color="#ffe34f"/>
                                <stop offset=".65" stop-color="#fdd63c"/>
                                <stop offset=".88" stop-color="#fbb52c"/>
                                <stop offset="1" stop-color="#f0932a"/>
                            </radialGradient>
                            <linearGradient id="shine" x2="0" y2="1">
                                <stop offset="0" stop-color="#fff0a0"/>
                                <stop offset="1" stop-color="#ffe873" stop-opacity=".5"/>
                            </linearGradient>
                            <radialGradient id="heart" cx=".4" cy=".3" r=".7">
                                <stop offset="0" stop-color="#ff5a5f"/>
                                <stop offset="1" stop-color="#d81c36"/>
                            </radialGradient>
                        </defs>
                        <circle cx="41" cy="41" r="41" fill="url(#face)"/>
                        <path d="M9 31Q12 5 41 4Q70 5 72 31Q55 34 41 32Q25 30 9 31Z" fill="url(#shine)"/>
                        <path d="M11 31Q17 20 30 23Q32 26 28 26Q18 26 13 32Q11 33 11 31ZM50 31Q61 27 71 37Q70 39 67 37Q59 32 51 34Q48 33 50 31Z" fill="#845108"/>
                        <circle cx="25" cy="42" r="6" fill="#845108"/>
                        <circle cx="24" cy="40" r="2" fill="#b98b45"/>
                        <path d="M48 43Q54 37 63 43Q64 46 61 45Q55 42 50 45Q47 46 48 43Z" fill="#845108"/>
                        <path d="M40 54Q49 50 49 56Q49 60 43 61Q51 62 50 66Q48 71 40 68" fill="none" stroke="#c73f20" stroke-width="3" stroke-linecap="round" stroke-linejoin="round"/>
                        <path d="M62 76C53 67 54 52 62 51Q68 51 69 58Q75 53 80 59C84 66 75 74 62 76Z" fill="url(#heart)"/>
                        <path d="M58 58Q59 54 62 54" fill="none" stroke="#ff9a94" stroke-width="2" stroke-linecap="round"/>
                    </svg><time class="float-right mt-[30px] text-[47px] leading-[54px] text-[#a2a4a5]">8:21 pm</time></p>
                </article>

                <article class="flow-root w-full rounded-[30px] bg-[#20272a] pt-[17px] pr-[22px] pb-[6px] pl-[26px]">
                    <p class="text-[59px] leading-[70px] text-[#f7f8fa]">So im here to consult whether you have a party dress bale<time class="float-right mt-[30px] text-[47px] leading-[54px] text-[#a2a4a5]">8:22 pm</time></p>
                </article>
            </div>
        </section>
    </main>
</body>
</html>
